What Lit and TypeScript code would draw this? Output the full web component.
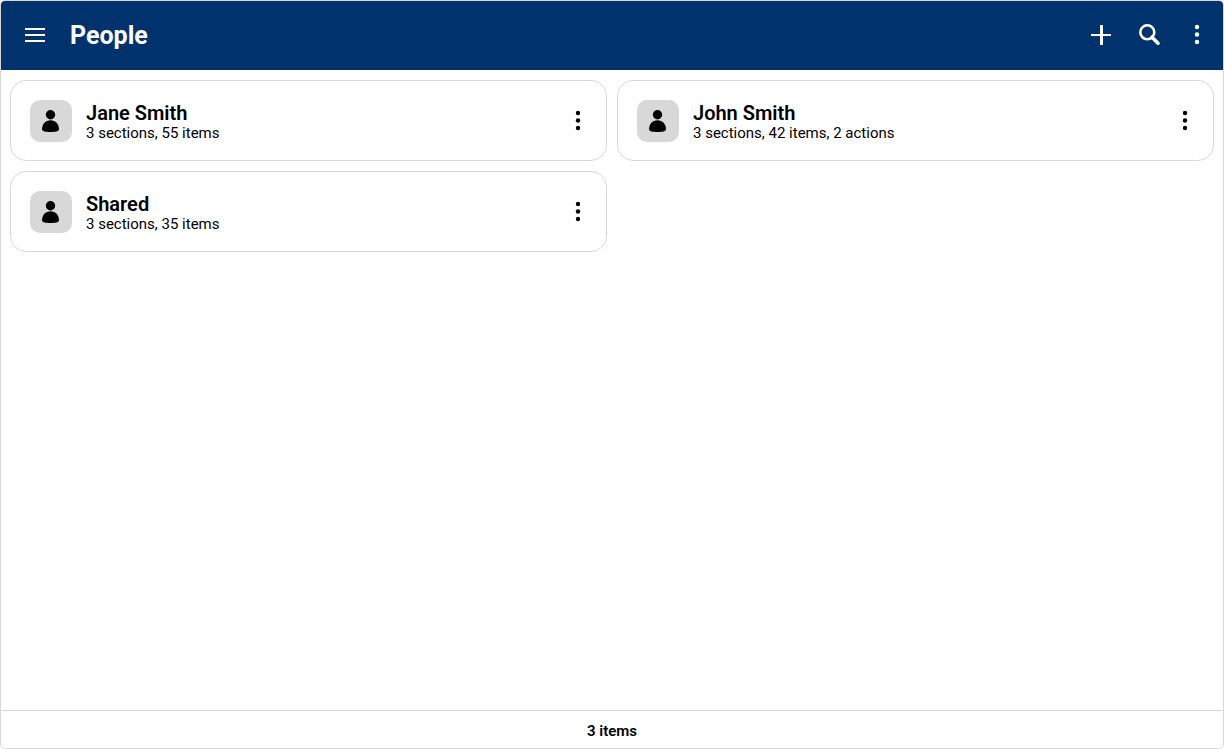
import { LitElement, html, css } from "lit";
import { customElement, property } from "lit/decorators.js";

interface Person {
  name: string;
  summary: string;
}

const dots = html`<svg width="24" height="24" viewBox="0 0 24 24" fill="currentColor" aria-hidden="true">
  <circle cx="12" cy="4" r="2.2" />
  <circle cx="12" cy="11.5" r="2.2" />
  <circle cx="12" cy="19" r="2.2" />
</svg>`;

@customElement("person-card")
class PersonCard extends LitElement {
  @property() name = "";
  @property() summary = "";

  static styles = css`
    :host {
      display: flex;
      align-items: center;
      box-sizing: border-box;
      padding: 19px 16px 18px 19px;
      border: 1px solid #d8d8d8;
      border-radius: 16px;
      background: #fff;
    }
    .avatar {
      flex: none;
      width: 42px;
      height: 42px;
      border-radius: 10px;
      background: #d8d8d8;
    }
    .avatar svg {
      display: block;
    }
    .text {
      flex: 1;
      min-width: 0;
      margin-left: 14px;
    }
    .name {
      margin: 0;
      font-size: 20px;
      line-height: 24px;
      font-weight: 600;
    }
    .summary {
      margin: 0;
      font-size: 15px;
      line-height: 16px;
    }
    .more {
      display: flex;
      padding: 0;
      border: 0;
      background: none;
      color: #000;
      cursor: pointer;
    }
  `;

  render() {
    return html`
      <div class="avatar">
        <svg width="42" height="42" viewBox="0 0 42 42" aria-hidden="true">
          <circle cx="20.5" cy="14.7" r="4.7" />
          <path d="M12 29.5C12 24 15.5 20.2 20.5 20.2S29 24 29 29.5C29 31.2 25.5 32 20.5 32S12 31.2 12 29.5Z" />
        </svg>
      </div>
      <div class="text">
        <h2 class="name">${this.name}</h2>
        <p class="summary">${this.summary}</p>
      </div>
      <button class="more" aria-label="Options for ${this.name}">${dots}</button>
    `;
  }
}

@customElement("app-root")
class AppRoot extends LitElement {
  private people: Person[] = [
    { name: "Jane Smith", summary: "3 sections, 55 items" },
    { name: "John Smith", summary: "3 sections, 42 items, 2 actions" },
    { name: "Shared", summary: "3 sections, 35 items" },
  ];

  static styles = css`
    :host {
      display: flex;
      flex-direction: column;
      box-sizing: border-box;
      min-height: 100vh;
      border: 1px solid #d8d8d8;
      border-radius: 5px;
      overflow: hidden;
      background: #fff;
      color: #000;
      font-family: Roboto, "Liberation Sans", sans-serif;
    }
    .bar {
      display: flex;
      align-items: center;
      padding: 18px 14px 19px 22px;
      background: #00336d;
      color: #fff;
    }
    .title {
      flex: 1;
      margin: 0 0 0 23px;
      padding-top: 2px;
      font-size: 25px;
      line-height: 30px;
      font-weight: 700;
    }
    .actions {
      display: flex;
      gap: 24px;
    }
    .icon {
      display: flex;
      padding: 0;
      border: 0;
      background: none;
      color: inherit;
      cursor: pointer;
    }
    .list {
      flex: 1;
      display: grid;
      grid-template-columns: repeat(auto-fill, minmax(400px, 1fr));
      align-content: start;
      gap: 10px;
      padding: 10px 9px;
    }
    .status {
      border-top: 1px solid #d8d8d8;
      padding: 11px 0 8px;
      text-align: center;
      font-size: 15px;
      line-height: 18px;
      font-weight: 600;
    }
  `;

  render() {
    return html`
      <header class="bar">
        <button class="icon" aria-label="Menu">
          <svg width="24" height="24" viewBox="0 0 24 24" fill="currentColor" aria-hidden="true">
            <path d="M2 5h20v2H2zM2 11h20v2H2zM2 17h20v2H2z" />
          </svg>
        </button>
        <h1 class="title">People</h1>
        <div class="actions">
          <button class="icon" aria-label="Add">
            <svg width="24" height="24" viewBox="0 0 24 24" fill="currentColor" aria-hidden="true">
              <path d="M2 11h20v2H2zM11 2h3v20h-3z" />
            </svg>
          </button>
          <button class="icon" aria-label="Search">
            <svg width="24" height="24" viewBox="0 0 24 24" fill="none" stroke="currentColor" aria-hidden="true">
              <circle cx="10.3" cy="9.3" r="7" stroke-width="2.6" />
              <path d="M15 14.2L21 20.2" stroke-width="3.6" stroke-linecap="round" />
            </svg>
          </button>
          <button class="icon" aria-label="More options">${dots}</button>
        </div>
      </header>
      <main class="list">
        ${this.people.map((p) => html`<person-card .name=${p.name} .summary=${p.summary}></person-card>`)}
      </main>
      <footer class="status">${this.people.length} items</footer>
    `;
  }
}
